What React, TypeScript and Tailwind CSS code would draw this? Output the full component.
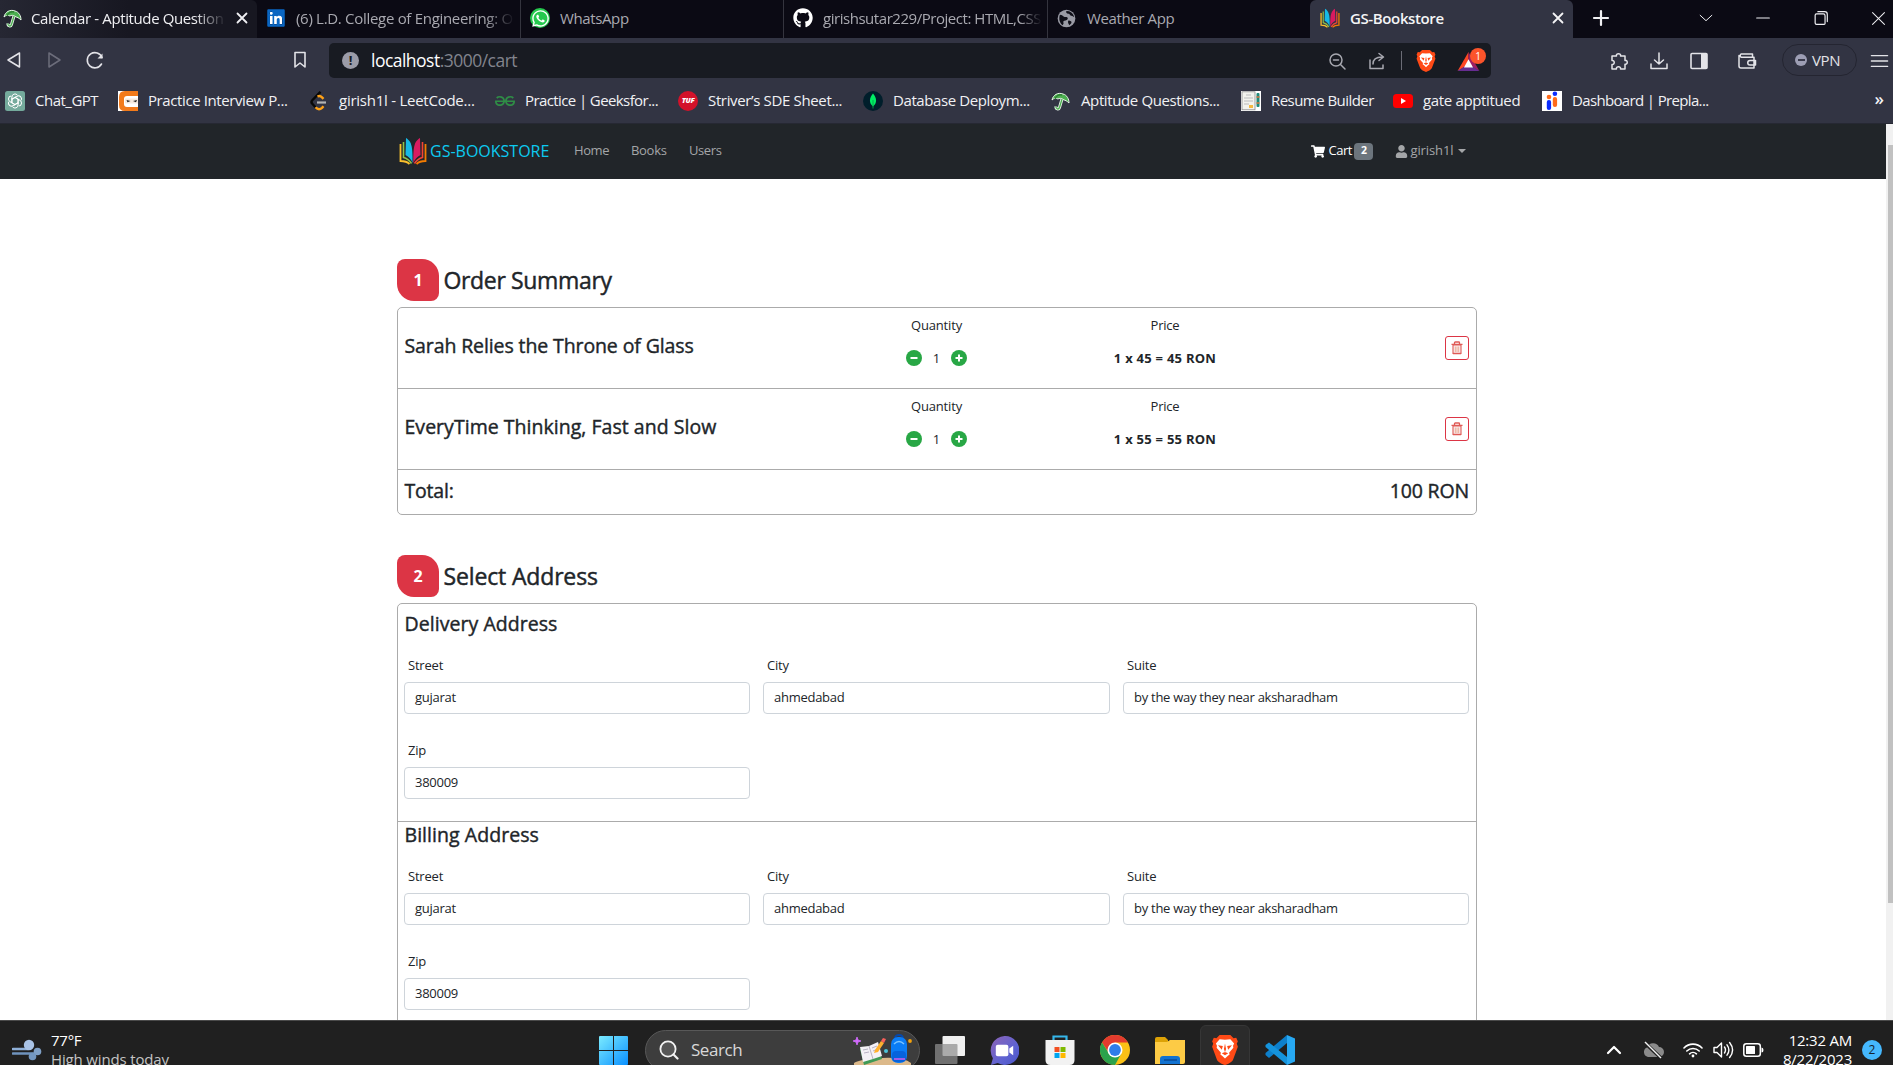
import type { ReactNode } from "react";
import { FaGithub, FaLinkedin, FaWhatsapp, FaUser, FaShoppingCart } from "react-icons/fa";
import { SiGeeksforgeeks } from "react-icons/si";

/* ---------- small drawings ---------- */

function Umbrella() {
  return (
    <svg viewBox="0 0 20 20" className="h-5 w-5">
      <path d="M1 9C2 4 7 1 12 3c4 1 6 5 6 9-2-2-4-3-5-3-2-2-5-2-6-1-2-1-4-1-6 1z" fill="#4caf50" stroke="#e8f5e9" strokeWidth="1" />
      <path d="M4 8C5 5 8 3 11 4" stroke="#2e7d32" strokeWidth="1.4" fill="none" />
      <path d="M11 8 8.5 16.500c-.8 2.500-4 1.500-3.500-1" fill="none" stroke="#e8f5e9" strokeWidth="3" />
      <path d="M11 8 8.5 16.500c-.8 2.500-4 1.500-3.500-1" fill="none" stroke="#4caf50" strokeWidth="1.300" />
    </svg>
  );
}

function BookLogo({ className }: { className: string }) {
  return (
    <svg viewBox="0 0 28 28" className={className}>
      <path d="M1.500 7v17c4 0 7 1 9 3" fill="none" stroke="#fbc02d" strokeWidth="1.800" />
      <path d="M4.500 5v15.500c4 1 6 3 8 6" fill="none" stroke="#8bc34a" strokeWidth="1.600" />
      <path d="M26.500 7v17c-4 0-7 1-9 3" fill="none" stroke="#f57c00" strokeWidth="1.800" />
      <path d="M23.500 5v15.500c-4 1-6 3-8 6" fill="none" stroke="#f44336" strokeWidth="1.600" />
      <path d="M7 1c5 3 7 7 6.600 25C12 22 10 20 6.500 18z" fill="#16b9e6" />
      <path d="M21 1c-5 3-7 7-6.600 25 1.600-4 3.600-6 7.100-8z" fill="#d81b60" />
    </svg>
  );
}

function Globe() {
  return (
    <svg viewBox="0 0 20 20" className="h-[19px] w-[19px]">
      <circle cx="10" cy="10" r="9.300" fill="#9a9ba5" />
      <path d="M3 6c2 0 3 1 4 2s3 0 4 1 0 3-2 3-3 1-2 3l-1 2C3 15 1.500 11 3 6zM10 2c-1 1 0 3 2 3s1 2 3 2 2 2 3 1c-1-4-4-6-8-6zM12 12c2 0 4 1 3 3l-2 2c-1-2-2-3-1-5z" fill="#101019" />
    </svg>
  );
}

function ChatGpt() {
  return (
    <svg viewBox="0 0 20 20" className="h-5 w-5">
      <rect width="20" height="20" rx="2.500" fill="#74aa9c" />
      <g fill="none" stroke="#fff" strokeWidth="1">
        {[0, 60, 120, 180, 240, 300].map((a) => (
          <path key={a} d="M6.900 11.800V6a3.100 3.100 0 0 1 5.600-1.800M6.900 8.200l4.200-2.400" transform={`rotate(${a} 10 10)`} />
        ))}
      </g>
    </svg>
  );
}

function CodingNinjas() {
  return (
    <svg viewBox="0 0 20 20" className="h-5 w-5">
      <rect width="20" height="20" fill="#fff" />
      <path d="M20 0H7Q1 0 1 6v8q0 6 6 6h13v-4H9q-3 0-3-3V8q0-3 3-3h11z" fill="#f27a1a" />
      <path d="M7 7.500h13v5H7z" fill="#f5e9de" />
      <path d="M8.500 9l4 1-3 1.300zM19 9l-4 1 3 1.300z" fill="#222" />
    </svg>
  );
}

function LeetCode() {
  return (
    <svg viewBox="0 0 20 20" className="h-5 w-5">
      <path d="M11.500.8 3.500 9q-2 2 0 4l3.500 3.800" fill="none" stroke="#080808" strokeWidth="2.400" />
      <path d="M6.500 16.300q3.300 3.500 6.500.5l1.500-1.600M8.500 5.500q2.500-1.200 4.500.8l1.500 1.500" fill="none" stroke="#ffa116" strokeWidth="2.400" />
      <path d="M8 11.500h9" stroke="#b3b3b3" strokeWidth="2.200" />
    </svg>
  );
}

function Tuf() {
  return (
    <div className="flex h-5 w-5 items-center justify-center rounded-full bg-[#d3122a] text-[7.500px] font-extrabold italic text-white">
      TUF
    </div>
  );
}

function Mongo() {
  return (
    <svg viewBox="0 0 20 20" className="h-5 w-5">
      <circle cx="10" cy="10" r="10" fill="#001e2b" />
      <path d="M10 2.500c4 4.500 4.200 9.500 0 13-4.200-3.500-4-8.500 0-13z" fill="#00ed64" />
      <path d="M10 9v8.500" stroke="#00a648" strokeWidth=".9" />
    </svg>
  );
}

function Resume() {
  return (
    <svg viewBox="0 0 20 20" className="h-5 w-5">
      <rect width="20" height="20" fill="#fff" />
      <rect x="1" y=".8" width="13" height="18" fill="#f3f3ee" stroke="#8a8a8a" strokeWidth=".8" />
      <path d="M5 4h5M3 7h9M3 10h9M3 13h5" stroke="#b5b5b5" strokeWidth=".9" />
      <rect x="8" y="14" width="4" height="3" fill="#f4b942" />
      <rect x="15.500" y="2" width="3" height="14" rx="1" fill="#1e8a7a" />
      <path d="M15.500 6h3M15.500 12h3" stroke="#d9743c" strokeWidth="1.500" />
    </svg>
  );
}

function YouTube() {
  return (
    <svg viewBox="0 0 20 20" className="h-5 w-5">
      <rect y="3" width="20" height="14" rx="3.500" fill="#f00" />
      <path d="M8 7v6l5-3z" fill="#fff" />
    </svg>
  );
}

function Prep() {
  return (
    <svg viewBox="0 0 20 20" className="h-5 w-5">
      <rect width="20" height="20" fill="#fff" />
      <rect x="4.800" y="9" width="4.300" height="10" rx="2.100" fill="#0b2cff" />
      <circle cx="7" cy="6" r="2.300" fill="#ff6a1a" />
      <rect x="10.800" y="6" width="4.300" height="10" rx="2.100" fill="#ff6a1a" />
      <circle cx="12.900" cy="2.800" r="2.300" fill="#0b2cff" />
    </svg>
  );
}

function Trash() {
  return (
    <svg viewBox="0 0 14 14" className="h-[14px] w-[14px]" fill="none" stroke="#df5a55">
      <path d="M3 4h8v8.500H3z" fill="#fbeef0" strokeWidth="1.100" />
      <path d="M1.500 3.300h11M4.500 3V1.800q0-.8.800-.8h3.400q.8 0 .8.800V3" strokeWidth="1.300" />
      <path d="M5.300 5.500V11M7 5.500V11M8.700 5.500V11" stroke="#e9a58c" strokeWidth=".9" />
      <path d="M3 12.500h8" strokeWidth="1.500" />
    </svg>
  );
}

function Line({ d, className = "h-5 w-5", w = 1.5 }: { d: string; className?: string; w?: number }) {
  return (
    <svg viewBox="0 0 20 20" className={className} fill="none" stroke="currentColor" strokeWidth={w} strokeLinecap="round" strokeLinejoin="round">
      <path d={d} />
    </svg>
  );
}

function BraveLion({ className }: { className: string }) {
  return (
    <svg viewBox="0 0 24 28" className={className}>
      <path d="M7 0h10l3 3 2.500-.4L24 6l-1 2 1 3-4.500 12c-1 2.500-5 4-7.500 5-2.500-1-6.500-2.500-7.500-5L0 11l1-3-1-2 1.500-3.400L4 3z" fill="#ff4a16" />
      <path d="M12 4.500 17 4l3.500 4-1 2 .3 2-4 4.500.5 1.700-1.800 1.300L12 22l-2.500-2.500-1.800-1.300.5-1.700-4-4.500.3-2-1-2L7 4z" fill="#fff" />
      <path d="m5.500 9.500 4.500.8-1 3.400zM18.500 9.500l-4.500.8 1 3.400zM12 8l1 5-1 3-1-3zM9 17l3-1.200 3 1.200-3 2z" fill="#ff4a16" />
    </svg>
  );
}

function Bat() {
  return (
    <div className="relative flex h-6 w-6 items-center justify-center">
      <svg viewBox="0 0 24 22" className="mt-0.5 h-5 w-[23px]">
        <path d="M12 0 0 21l12-7z" fill="#ff4724" />
        <path d="M12 0v14l12 7z" fill="#9e1f63" />
        <path d="M0 21h24l-12-8z" fill="#662d91" />
        <path d="m12 8 5 9H7z" fill="#fff" />
      </svg>
      <span className="absolute -top-px left-[14px] flex h-4 w-4 items-center justify-center rounded-full bg-[#fb542b] text-[10px] leading-none text-white">1</span>
    </div>
  );
}

/* ---------- browser chrome ---------- */

function TabStrip() {
  return (
    <div className="flex h-[38px] items-stretch bg-[#0b0a14] text-[15px] tracking-[-0.380px] text-[#a9a9b0]">
      <div className="flex w-[257px] items-center rounded-tr-md bg-gradient-to-r from-[#262733] via-[#171721] to-[#171721] pb-[2px] pl-[3px] text-[#f0f0f3]">
        <Umbrella />
        <span className="ml-[8px] w-[195px] overflow-hidden whitespace-nowrap [mask-image:linear-gradient(to_right,black_84%,transparent)]">Calendar - Aptitude Question</span>
        <Line d="M5 5l10 10M15 5L5 15" className="ml-[7px] h-[18px] w-[18px]" w={2} />
      </div>
      <div className="flex w-[264px] items-center border-r border-[#34343e] pb-[2px] pl-[9px]">
        <FaLinkedin className="h-5 w-5 text-[#0a66c2] [background:linear-gradient(#fff,#fff)_center/12px_12px_no-repeat]" />
        <span className="ml-[10px] w-[219px] overflow-hidden whitespace-nowrap tracking-[-0.300px] [mask-image:linear-gradient(to_right,black_86%,transparent)]">(6) L.D. College of Engineering: O</span>
      </div>
      <div className="flex w-[263px] items-center border-r border-[#34343e] pb-[2px] pl-[9px]">
        <span className="flex h-[20px] w-[20px] items-center justify-center rounded-full bg-[#25c94e]">
          <FaWhatsapp className="h-[19px] w-[19px] text-white" />
        </span>
        <span className="ml-[10px]">WhatsApp</span>
      </div>
      <div className="flex w-[264px] items-center border-r border-[#34343e] pb-[2px] pl-[9px]">
        <FaGithub className="h-5 w-5 text-white" />
        <span className="ml-[10px] w-[219px] overflow-hidden whitespace-nowrap tracking-[-0.460px] [mask-image:linear-gradient(to_right,black_90%,transparent)]">girishsutar229/Project: HTML,CSS</span>
      </div>
      <div className="flex w-[262px] items-center pb-[2px] pl-[9px]">
        <Globe />
        <span className="ml-[11px]">Weather App</span>
      </div>
      <div className="flex w-[263px] items-center rounded-t-md bg-[#323443] pb-[2px] pl-[10px] text-[#f4f4f6]">
        <BookLogo className="h-5 w-5" />
        <span className="ml-[10px] w-[199px] font-semibold">GS-Bookstore</span>
        <Line d="M5 5l10 10M15 5L5 15" className="h-[18px] w-[18px]" w={2} />
      </div>
      <div className="flex flex-1 items-center pb-[2px] pl-[18px] text-[#f0f0f3]">
        <Line d="M10 3v14M3 10h14" w={2.200} />
        <Line d="M3.500 7l6.500 6 6.500-6" className="ml-[86px] h-[18px] w-[18px]" w={1.100} />
        <Line d="M3 10h14" className="ml-[39px] h-[18px] w-[18px]" w={1.300} />
        <Line d="M5 5.500h7.500a2 2 0 0 1 2 2V16a1 1 0 0 1-1 1H5a1.500 1.500 0 0 1-1.500-1.500V7A1.500 1.500 0 0 1 5 5.500zM6.500 3H14a3 3 0 0 1 3 3v8" className="ml-[40px] h-[18px] w-[18px]" w={1.300} />
        <Line d="M3 3l14 14M17 3L3 17" className="ml-[40px] h-[17px] w-[17px]" w={1.200} />
      </div>
    </div>
  );
}

function Toolbar() {
  return (
    <div className="flex h-[45px] items-center text-[#e3e3e8]">
      <div className="flex w-[329px] items-center pb-px pl-[4px]">
        <Line d="M15.500 3v14L4 10z" />
        <span className="ml-[20px] text-[#6c6d7b]">
          <Line d="M5 3v14l11-7z" />
        </span>
        <svg viewBox="0 0 20 20" className="ml-[21px] h-5 w-5" fill="none" stroke="currentColor" strokeWidth="1.600" strokeLinecap="round">
          <path d="M17 7.500A7.600 7.600 0 1 0 16.500 14" />
          <path d="M12.500 8.500h5v-5z" fill="currentColor" stroke="none" />
        </svg>
        <Line d="M5 2.500h10V17l-5-4-5 4z" className="ml-[185px] h-5 w-5" w={1.600} />
      </div>
      <div className="flex h-[35px] w-[1162px] items-center rounded-[5px] bg-[#181b22] pl-[13px]">
        <span className="flex h-[17px] w-[17px] items-center justify-center rounded-full bg-[#9b9ca8] text-[13px] font-bold leading-none text-[#181b22]">!</span>
        <span className="ml-3 text-[17.500px] tracking-[-0.520px] text-[#82848d]">
          <span className="text-white">localhost</span>:3000/cart
        </span>
        <div className="ml-auto flex items-center pr-[11px] text-[#a7a8b0]">
          <Line d="M9 3a6 6 0 1 0 0 12A6 6 0 0 0 9 3zM13.500 13.500L18 18M6.500 9h5" />
          <Line d="M3 9v8.500h13V14M6 13c0-5 3-7 9-7M12 2.500L16.500 6 12 9.500" className="ml-[20px] h-5 w-5" />
          <span className="ml-[14px] mr-[14px] h-[19px] w-px bg-[#6b6c76]" />
          <BraveLion className="h-[22px] w-5" />
          <span className="ml-[20px]"><Bat /></span>
        </div>
      </div>
      <div className="flex flex-1 items-center pl-[118px]">
        <Line d="M3 5h4.500c-1-3 5-3 4 0H16v4.500c3-1 3 4.500 0 3.700V18h-4.500c.8-3-4.800-3-4 0H3v-4.500c3 .5 3-4.500 0-4z" />
        <Line d="M10 2v11M5.500 9L10 13l4.500-4M2 13v4.500h16V13" className="ml-[20px] h-5 w-5" />
        <svg viewBox="0 0 20 20" className="ml-[20px] h-5 w-5">
          <rect x="2" y="2.500" width="16" height="15" rx="1" fill="none" stroke="currentColor" strokeWidth="1.600" />
          <rect x="12" y="2.500" width="6" height="15" fill="currentColor" />
        </svg>
        <Line d="M15.500 6V3H4a2 2 0 0 0 0 3.200h13V17H4a2 2 0 0 1-2-2V4.500M18.500 9.500H13a2 2 0 0 0 0 4.500h5.500z" className="ml-[28px] h-5 w-5" />
        <div className="-mt-px ml-[25px] flex h-[32px] w-[75px] items-center rounded-full border border-[#242531] pl-[12px] text-[15px] tracking-[-0.400px]">
          <span className="flex h-[12px] w-[12px] items-center justify-center rounded-full bg-[#9d9eb4]">
            <span className="h-[2px] w-[7px] bg-[#3a3b4c]" />
          </span>
          <span className="ml-[5px]">VPN</span>
        </div>
        <Line d="M1 4h18M1 10h18M1 16h18" className="ml-[13px] h-[18px] w-[19px]" w={1.500} />
      </div>
    </div>
  );
}

const bookmarks: { icon: ReactNode; text: string; width: string; track: string }[] = [
  { icon: <ChatGpt />, text: "Chat_GPT", width: "w-[113px]", track: "tracking-[-0.500px]" },
  { icon: <CodingNinjas />, text: "Practice Interview P...", width: "w-[191px]", track: "tracking-[-0.400px]" },
  { icon: <LeetCode />, text: "girish1l - LeetCode...", width: "w-[186px]", track: "tracking-[-0.250px]" },
  { icon: <SiGeeksforgeeks className="h-5 w-5 text-[#2f8d46]" />, text: "Practice | Geeksfor...", width: "w-[183px]", track: "tracking-[-0.600px]" },
  { icon: <Tuf />, text: "Striver’s SDE Sheet...", width: "w-[185px]", track: "tracking-[-0.350px]" },
  { icon: <Mongo />, text: "Database Deploym...", width: "w-[188px]", track: "tracking-[-0.400px]" },
  { icon: <Umbrella />, text: "Aptitude Questions...", width: "w-[190px]", track: "tracking-[-0.380px]" },
  { icon: <Resume />, text: "Resume Builder", width: "w-[152px]", track: "tracking-[-0.550px]" },
  { icon: <YouTube />, text: "gate apptitued", width: "w-[149px]", track: "tracking-[-0.350px]" },
  { icon: <Prep />, text: "Dashboard | Prepla...", width: "w-[200px]", track: "tracking-[-0.650px]" },
];

function Bookmarks() {
  return (
    <div className="flex h-[41px] items-center border-b border-[#262833] pb-[5px] pl-[5px] text-[15px] text-[#f1f1f4]">
      {bookmarks.map((b) => (
        <div key={b.text} className={`flex shrink-0 items-center gap-[10px] whitespace-nowrap ${b.width} ${b.track}`}>
          {b.icon}
          <span>{b.text}</span>
        </div>
      ))}
      <span className="ml-auto pb-[4px] pr-[9px] text-[17px] font-semibold leading-none">»</span>
    </div>
  );
}

/* ---------- bookstore page ---------- */

function NavBar() {
  return (
    <nav className="flex h-[55px] items-center bg-[#212529] pb-px pl-[399px] text-[13px] text-[#a4a6a8]">
      <BookLogo className="h-7 w-7" />
      <span className="ml-[3px] w-[144px] text-[16px] text-[#0dcaf0]">GS-BOOKSTORE</span>
      <span className="w-[57px] tracking-[-0.400px]">Home</span>
      <span className="w-[58px] tracking-[-0.300px]">Books</span>
      <span className="tracking-[-0.400px]">Users</span>
      <div className="ml-[590px] flex items-center text-white">
        <FaShoppingCart className="h-[13px] w-[14px]" />
        <span className="ml-[3px] w-[26px] tracking-[-0.500px]">Cart</span>
        <span className="flex h-[17px] w-[19px] items-center justify-center rounded bg-[#6c757d] text-[10.500px] font-bold">2</span>
      </div>
      <div className="ml-[22px] flex items-center">
        <FaUser className="h-[13px] w-[13px]" />
        <span className="ml-[2px] tracking-[-0.100px]">girish1l</span>
        <span className="ml-[4px] border-x-[4px] border-t-[4px] border-x-transparent border-t-[#a4a6a8]" />
      </div>
    </nav>
  );
}

function Heading({ n, text, track }: { n: string; text: string; track: string }) {
  return (
    <div className="flex h-[42px] items-center">
      <span className="flex h-[42px] w-[42px] items-center justify-center rounded-bl-[17px] rounded-br-[8px] rounded-tl-[8px] rounded-tr-[17px] bg-[#dc3545] text-[16px] font-bold text-white">
        {n}
      </span>
      <h2 className={`ml-[4.500px] text-[23px] [-webkit-text-stroke:0.450px_currentColor] ${track}`}>{text}</h2>
    </div>
  );
}

function Step({ sign }: { sign: "minus" | "plus" }) {
  return (
    <svg viewBox="0 0 16 16" className="h-4 w-4">
      <circle cx="8" cy="8" r="8" fill="#28a745" />
      <path d={sign === "minus" ? "M4.500 8h7" : "M4.500 8h7M8 4.500v7"} stroke="#fff" strokeWidth="2" />
    </svg>
  );
}

function Item({ title, track, price }: { title: string; track: string; price: number }) {
  return (
    <div className="flex h-[81px] border-b border-[#ababab] pl-[6.500px] pr-[7px]">
      <h3 className={`w-[447px] pt-[24px] text-[19.500px] leading-[28px] [-webkit-text-stroke:0.400px_currentColor] ${track}`}>{title}</h3>
      <div className="flex w-[170px] flex-col items-center pt-[8px] leading-[18px]">
        <span className="tracking-[-0.150px]">Quantity</span>
        <div className="mt-[15px] flex items-center">
          <Step sign="minus" />
          <span className="w-[29px] text-center">1</span>
          <Step sign="plus" />
        </div>
      </div>
      <div className="ml-[56px] flex w-[175px] flex-col items-center pt-[8px] leading-[18px]">
        <span className="tracking-[-0.200px]">Price</span>
        <span className="mt-[15px] font-bold tracking-[0.250px]">
          1 x {price} = {price} RON
        </span>
      </div>
      <button className="ml-auto mt-[28px] flex h-[24px] w-[24px] items-center justify-center rounded-[3px] border border-[#dc3545]">
        <Trash />
      </button>
    </div>
  );
}

function Field({ label, value }: { label: string; value: string }) {
  return (
    <label className="flex h-[85px] flex-col">
      <span className="h-[26px] pl-[4px] leading-[19px] tracking-[-0.200px]">{label}</span>
      <span className="flex h-[32px] items-center rounded border border-[#ced4da] pl-[10px] tracking-[-0.270px]">{value}</span>
    </label>
  );
}

function Address({ title, className }: { title: string; className: string }) {
  return (
    <section className={`px-[6px] ${className}`}>
      <h3 className="pl-[0.500px] text-[19.500px] leading-[28px] tracking-[0.050px] [-webkit-text-stroke:0.400px_currentColor]">{title}</h3>
      <div className="mt-[18px] grid grid-cols-[346px_347px_346px] gap-x-[13px]">
        <Field label="Street" value="gujarat" />
        <Field label="City" value="ahmedabad" />
        <Field label="Suite" value="by the way they near aksharadham" />
        <Field label="Zip" value="380009" />
      </div>
    </section>
  );
}

function Page() {
  return (
    <div className="flex h-[896px] overflow-hidden bg-white">
      <div className="w-[1886px]">
        <NavBar />
        <main className="ml-[397px] mt-[80px] w-[1080px] text-[13px] text-[#212529]">
          <Heading n="1" text="Order Summary" track="tracking-[-0.350px]" />
          <div className="mt-[6px] h-[208px] rounded-[5px] border border-[#ababab]">
            <Item title="Sarah Relies the Throne of Glass" track="tracking-[-0.110px]" price={45} />
            <Item title="EveryTime Thinking, Fast and Slow" track="tracking-[0.030px]" price={55} />
            <div className="flex h-[41px] items-center justify-between pl-[6.500px] pr-[7px] text-[19.500px] [-webkit-text-stroke:0.400px_currentColor]">
              <span className="tracking-[-0.200px]">Total:</span>
              <span className="tracking-[-0.150px]">100 RON</span>
            </div>
          </div>
          <div className="mt-[40px]">
            <Heading n="2" text="Select Address" track="tracking-[-0.150px]" />
          </div>
          <div className="mt-[6px] h-[500px] rounded-[5px] border border-[#ababab]">
            <Address title="Delivery Address" className="h-[218px] border-b border-[#ababab] pt-[6px]" />
            <Address title="Billing Address" className="-mt-px" />
          </div>
        </main>
      </div>
      <div className="flex w-[7px] flex-col bg-[#f1f1f1] pl-[2px] pt-[21px]">
        <div className="h-[758px] bg-[#c1c1c1]" />
      </div>
    </div>
  );
}

/* ---------- taskbar ---------- */

function Slot({ children, active }: { children: ReactNode; active?: boolean }) {
  return (
    <div className={active ? "mx-[2.500px] flex h-[50px] w-[50px] items-center justify-center rounded-md border border-[#363636] bg-[#2b2b2b]" : "flex w-[55px] items-center justify-center"}>
      {children}
    </div>
  );
}

function Taskbar() {
  return (
    <div className="h-[45px] overflow-hidden bg-[#202020]">
      <div className="flex h-[59px] items-center border-t border-[#4a4a4a] pl-[12px] text-[15px] text-white">
        <svg viewBox="0 0 30 22" className="h-[22px] w-[30px]" fill="none" strokeLinecap="round">
          <path d="M1 10h15" stroke="#8fb0d8" strokeWidth="2.600" />
          <path d="M1 14.500h22" stroke="#6f93bd" strokeWidth="2.600" />
          <circle cx="17" cy="6" r="5.200" fill="#a9c3e6" />
          <circle cx="25.500" cy="12.500" r="3.800" fill="#7fa0c6" />
          <circle cx="20.500" cy="17.500" r="3.800" fill="#7397c0" />
        </svg>
        <div className="ml-[9px] w-[548px] leading-[19.500px]">
          <div className="tracking-[-0.250px]">77°F</div>
          <div className="tracking-[-0.150px] text-[#c4c4c4]">High winds today</div>
        </div>
        <svg viewBox="0 0 29 29" className="h-[29px] w-[29px]">
          <defs>
            <linearGradient id="win" x1="0" y1="0" x2="1" y2="1" gradientUnits="objectBoundingBox">
              <stop offset="0" stopColor="#7bebff" />
              <stop offset="1" stopColor="#0a90ff" />
            </linearGradient>
          </defs>
          <path d="M0 1q0-1 1-1h13v14H0zM15 0h13q1 0 1 1v13H15zM0 15h14v14H1q-1 0-1-1zM15 15h14v13q0 1-1 1H15z" fill="url(#win)" />
        </svg>
        <div className="ml-[17px] flex h-[41px] w-[275px] items-center rounded-full border border-[#585858] bg-[#3d3d3d] pl-[13px] text-[#d8d8d8]">
          <svg viewBox="0 0 20 20" className="h-5 w-5" fill="none" stroke="#f2f2f2" strokeWidth="1.800" strokeLinecap="round">
            <circle cx="9" cy="9" r="7.600" fill="#565656" />
            <path d="M14.500 14.500L18.500 18.500" strokeWidth="2.200" />
          </svg>
          <span className="ml-[12px] w-[161px] text-[17px] tracking-[-0.450px]">Search</span>
          <svg viewBox="0 0 60 32" className="h-8 w-[60px]">
            <path d="M2 29q6-4 28-5t29 5v3H2z" fill="#dcb98a" />
            <path d="M5 3l1 3 3 1-3 1-1 3-1-3-3-1 3-1z" fill="#d36bff" stroke="#d36bff" strokeWidth=".8" />
            <path d="M8 15l18-5 4 15-18 6z" fill="#3f9a55" />
            <path d="M8 13l9-1 9-4 4 14-9 3-10 3z" fill="#f4f1f6" />
            <path d="M17 12l4 13M11 16l5-1M12 19l5-1M20 14l5-2M21 17l5-2" stroke="#b9b2c4" strokeWidth="1" />
            <path d="M23 16l6-9 3 2-6 9-4 1z" fill="#ffb02e" />
            <path d="M29 7l2-3 3 1-2 4z" fill="#f8605a" />
            <circle cx="34" cy="17" r="2" fill="#4cc3d9" />
            <circle cx="58" cy="7" r="1.900" fill="#f5a20a" />
            <path d="M43 5q0-4 4-4t4 4" fill="none" stroke="#0848a8" strokeWidth="2" />
            <rect x="39" y="3" width="16" height="26" rx="7" fill="#0a7cf5" />
            <path d="M42 10q5-5 10 0" stroke="#7bc4ff" fill="none" strokeWidth="1.500" />
            <rect x="40" y="17" width="14" height="11" rx="4" fill="#0763dc" />
            <path d="M42 25h11" stroke="#a05de8" strokeWidth="2" />
          </svg>
        </div>
        <div className="ml-[2px] flex items-center">
          <Slot>
            <svg viewBox="0 0 30 28" className="h-7 w-[30px]">
              <rect x="7.500" y="0" width="22.500" height="20" rx="1" fill="#f0f0f0" />
              <rect x="0" y="8" width="22.500" height="20" rx="1" fill="#8f8f8f" fillOpacity=".72" />
            </svg>
          </Slot>
          <Slot>
            <svg viewBox="0 0 30 30" className="h-[29px] w-[29px]">
              <defs>
                <linearGradient id="chat" x1="0" y1="0" x2="1" y2="1">
                  <stop offset="0" stopColor="#8d63b5" />
                  <stop offset=".6" stopColor="#5f63d2" />
                  <stop offset="1" stopColor="#4a55c8" />
                </linearGradient>
              </defs>
              <path d="M15 0a15 15 0 1 1-7 28L1 30l2-7A15 15 0 0 1 15 0z" fill="url(#chat)" />
              <rect x="6" y="9" width="13" height="12" rx="2" fill="#fff" />
              <path d="M20 13l4-3v10l-4-3z" fill="#fff" />
            </svg>
          </Slot>
          <Slot>
            <svg viewBox="0 0 30 30" className="h-[30px] w-[30px]">
              <path d="M8.500 6V1.500h13V6" fill="none" stroke="#35b6ea" strokeWidth="2.200" />
              <path d="M.5 5h29v20q0 5-5 5h-19q-5 0-5-5z" fill="#f2f2f2" />
              <path d="M9.500 12h5v5h-5z" fill="#f25022" />
              <path d="M15.500 12h5v5h-5z" fill="#7fba00" />
              <path d="M9.500 18h5v5h-5z" fill="#00a4ef" />
              <path d="M15.500 18h5v5h-5z" fill="#ffb900" />
            </svg>
          </Slot>
          <Slot>
            <svg viewBox="0 0 30 30" className="h-[30px] w-[30px]">
              <circle cx="15" cy="15" r="15" fill="#fbc116" />
              <path d="M2 7.500A15 15 0 0 1 28 7.500H15L9 18z" fill="#e33b2e" />
              <path d="M2 7.500A15 15 0 0 0 15 30l6.200-11.200L9 18.500z" fill="#2ba24c" />
              <circle cx="15" cy="15" r="7.500" fill="#fff" />
              <circle cx="15" cy="15" r="5.900" fill="#2f7de9" />
            </svg>
          </Slot>
          <Slot>
            <svg viewBox="0 0 30 28" className="h-7 w-[30px]">
              <path d="M0 3q0-2 2-2h8l3 3v4H0z" fill="#dda206" />
              <path d="M0 6h12l3-2h15v22q0 2-2 2H0z" fill="#fdcb45" />
              <path d="M5 28v-5q0-3 3-3h14q3 0 3 3v5z" fill="#1272d0" />
              <path d="M9 24h13" stroke="#0a4a95" strokeWidth="1.500" />
            </svg>
          </Slot>
          <Slot active>
            <BraveLion className="h-[30px] w-[26px]" />
          </Slot>
          <Slot>
            <svg viewBox="0 0 30 30" className="h-[30px] w-[30px]">
              <path d="M22 0v8L4 23l-3.500-3v-2z" fill="#0d7fcb" />
              <path d="M22 30v-8L4 7.500.500 10v2z" fill="#1593dc" />
              <path d="M22 0l8 3.500v23L22 30z" fill="#27a8f2" />
            </svg>
          </Slot>
        </div>
        <div className="ml-auto flex items-center pr-[11px]">
          <Line d="M4 13l6-6 6 6" w={2.200} />
          <svg viewBox="0 0 22 18" className="ml-[18px] h-[18px] w-[22px]">
            <path d="M6 16a5 5 0 0 1-1-9.500A6.500 6.500 0 0 1 17 6a5 5 0 0 1 0 10z" fill="#8b8b8b" />
            <path d="M2 1l17 16" stroke="#202020" strokeWidth="3.500" />
            <path d="M3 1l16 16" stroke="#f2f2f2" strokeWidth="1.500" />
          </svg>
          <svg viewBox="0 0 20 16" className="ml-[19px] h-4 w-5" fill="none" stroke="#fff" strokeWidth="1.600" strokeLinecap="round">
            <path d="M1 6a12.500 12.500 0 0 1 18 0M3.800 9a8.800 8.800 0 0 1 12.400 0M6.600 11.800a5 5 0 0 1 6.800 0" />
            <circle cx="10" cy="14" r="1.400" fill="#fff" stroke="none" />
          </svg>
          <svg viewBox="0 0 21 18" className="ml-[10px] h-[18px] w-[21px]" fill="none" stroke="#fff" strokeWidth="1.400" strokeLinecap="round" strokeLinejoin="round">
            <path d="M1 6.500h3L8.500 2v14L4 11.500H1zM11.500 6q2 3 0 6M14 3.800q3.800 5.200 0 10.400M16.600 1.500q6 7.500 0 15" />
          </svg>
          <svg viewBox="0 0 21 14" className="ml-[9px] h-[14px] w-[21px]">
            <rect x=".8" y=".8" width="16.500" height="12.400" rx="2.500" fill="none" stroke="#fff" strokeWidth="1.500" />
            <rect x="3" y="3" width="9" height="8" rx=".6" fill="#fff" />
            <path d="M18.500 4.500q2 0 2 2.500t-2 2.500z" fill="#fff" />
          </svg>
          <div className="ml-[17px] w-[71px] whitespace-nowrap text-right leading-[19.500px] tracking-[-0.220px]">
            <div>12:32 AM</div>
            <div>8/22/2023</div>
          </div>
          <span className="ml-[10px] flex h-5 w-5 items-center justify-center rounded-full bg-[#45b8fe] text-[12px] text-[#15232e]">2</span>
        </div>
      </div>
    </div>
  );
}

export default function App() {
  return (
    <div className="flex h-[1065px] w-[1893px] flex-col overflow-hidden bg-[#323443] font-['Open_Sans','Noto_Sans',sans-serif]">
      <TabStrip />
      <Toolbar />
      <Bookmarks />
      <Page />
      <Taskbar />
    </div>
  );
}
